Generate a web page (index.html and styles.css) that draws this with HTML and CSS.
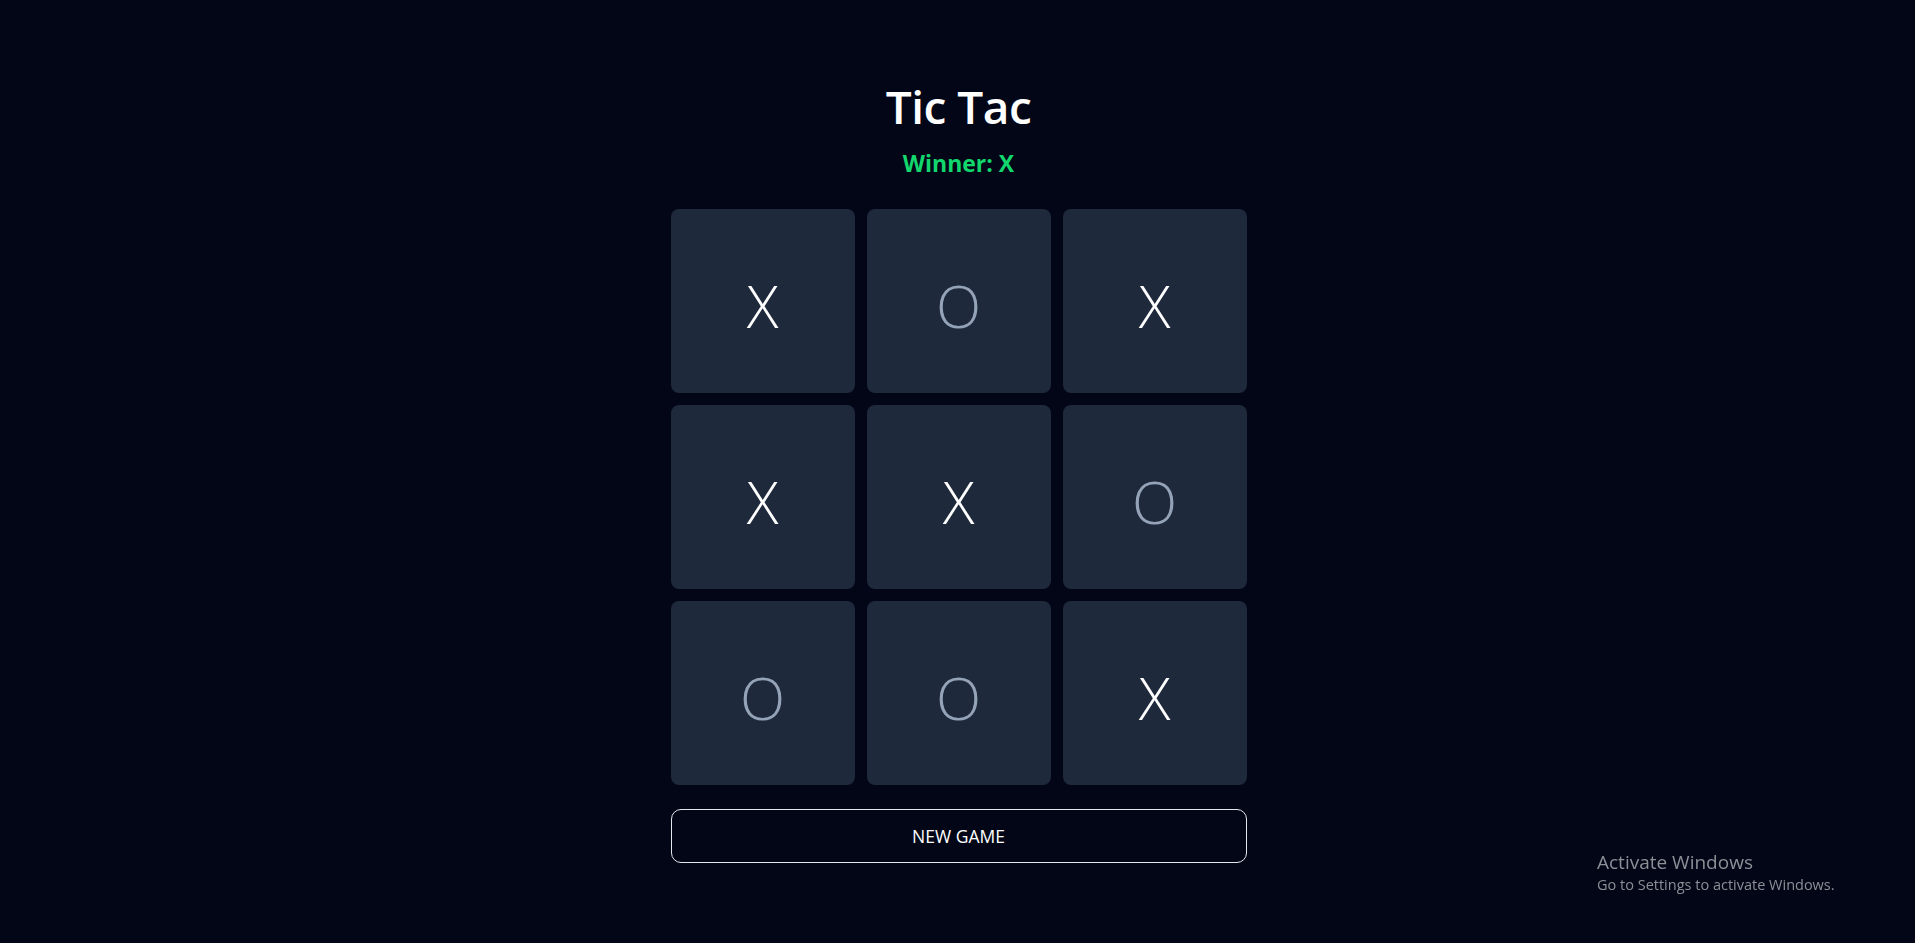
FILE: index.html
```html
<!DOCTYPE html>
<html lang="en">
<head>
<meta charset="utf-8">
<title>Tic Tac</title>
<link rel="stylesheet" href="styles.css">
</head>
<body>
<main class="game">
  <h1 class="title">Tic Tac</h1>
  <p class="status">Winner: X</p>
  <div class="board">
    <button class="cell x">X</button>
    <button class="cell o">O</button>
    <button class="cell x">X</button>
    <button class="cell x">X</button>
    <button class="cell x">X</button>
    <button class="cell o">O</button>
    <button class="cell o">O</button>
    <button class="cell o">O</button>
    <button class="cell x">X</button>
  </div>
  <button class="reset">NEW GAME</button>
</main>
<div class="watermark">
  <div class="wm-title">Activate Windows</div>
  <div class="wm-sub">Go to Settings to activate Windows.</div>
</div>
</body>
</html>
```
FILE: styles.css
```css
html, body {
  margin: 0;
  padding: 0;
  background: #020617;
  height: 100%;
}
body {
  font-family: "Open Sans", "Noto Sans", sans-serif;
  color: #ffffff;
  overflow: hidden;
}
.game {
  width: 576px;
  margin: 0 auto;
  padding-top: 77px;
  display: flex;
  flex-direction: column;
  align-items: center;
  transform: translateX(1px);
}
.title {
  margin: 0;
  font-size: 46px;
  font-weight: 600;
  line-height: 58px;
  letter-spacing: -0.5px;
}
.status {
  margin: 12px 0 0;
  font-size: 23px;
  font-weight: 700;
  line-height: 32px;
  color: #12d76d;
}
.board {
  margin-top: 30px;
  display: grid;
  grid-template-columns: repeat(3, 184px);
  grid-auto-rows: 184px;
  gap: 12px;
}
.cell {
  border: none;
  border-radius: 8px;
  background: #1e293b;
  font-family: "Open Sans", sans-serif;
  font-size: 59px;
  font-weight: 300;
  line-height: 1;
  padding: 8px 0 0;
  display: flex;
  align-items: center;
  justify-content: center;
}
.cell.x { color: #ffffff; }
.cell.o { color: #94a3b8; }
.reset {
  margin-top: 24px;
  width: 576px;
  height: 54px;
  background: transparent;
  border: 1px solid #e2e8f0;
  border-radius: 10px;
  color: #ffffff;
  font-family: "Open Sans", sans-serif;
  font-size: 17.5px;
  font-weight: 400;
}
.watermark {
  position: fixed;
  left: 1597px;
  top: 850px;
  color: #8d8f97;
  font-family: "Open Sans", sans-serif;
}
.wm-title {
  font-size: 19px;
  line-height: 25px;
}
.wm-sub {
  font-size: 14.5px;
  line-height: 20px;
}
```
